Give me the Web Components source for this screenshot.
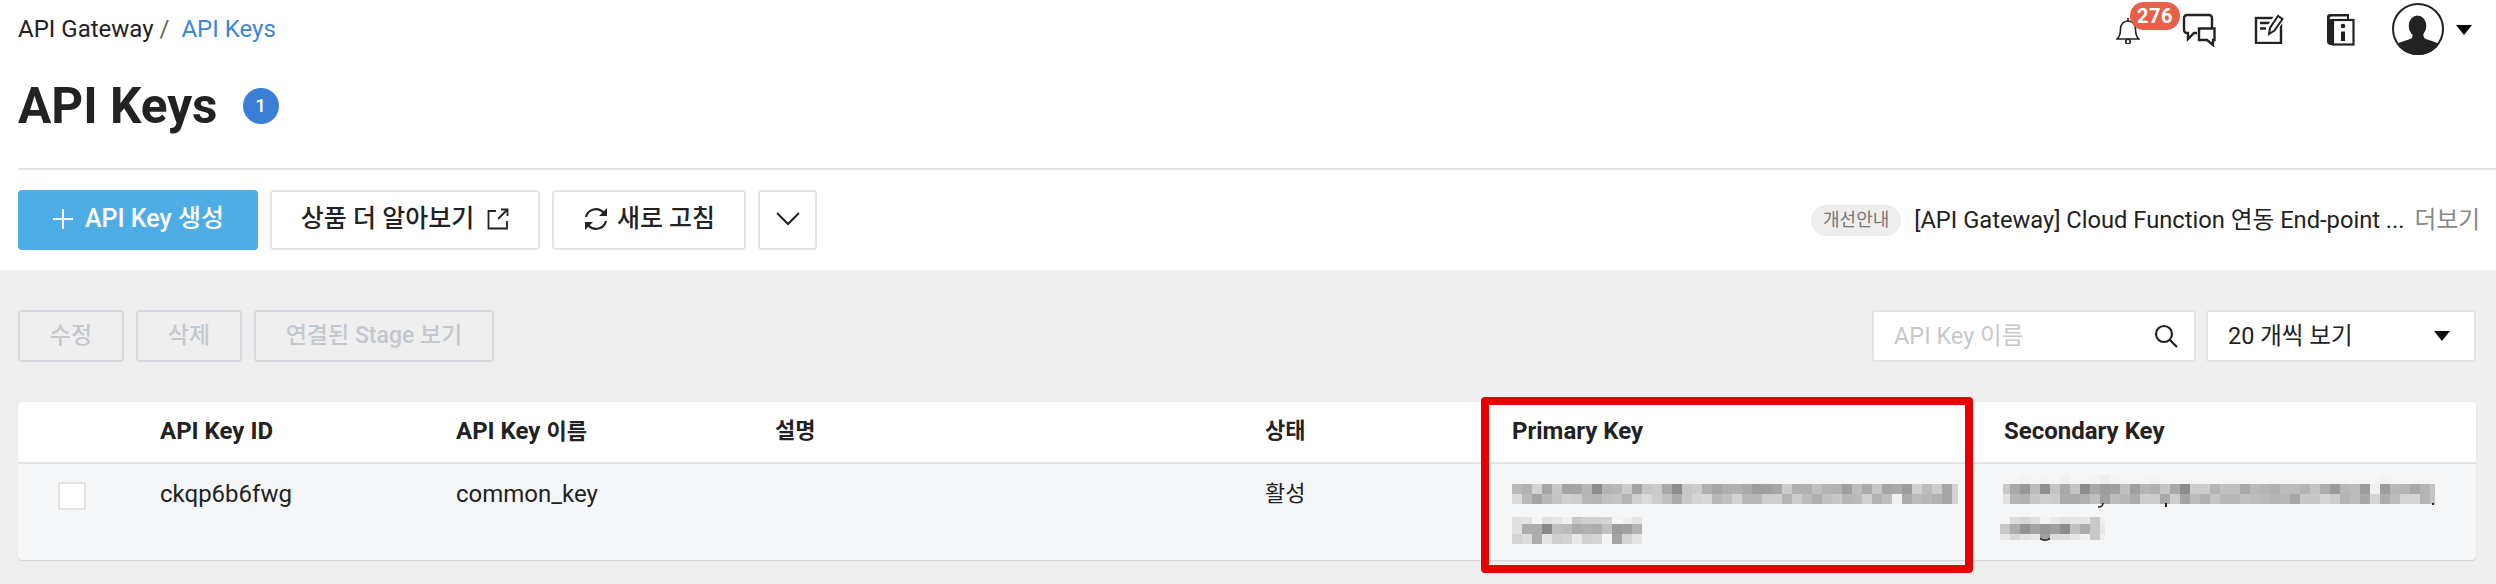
<!DOCTYPE html>
<html lang="ko">
<head>
  <meta charset="UTF-8">
  <title>API Keys</title>
  <style>
    html, body { margin: 0; padding: 0; background: #fff; overflow: hidden; }
    body { font-family: Roboto, "Noto Sans CJK KR", sans-serif; color: #222; }
  </style>
</head>
<body>
  <api-keys-page></api-keys-page>
  <script>
    const FONT = 'Roboto, "Noto Sans CJK KR", sans-serif';

    class UiButton extends HTMLElement {
      constructor() {
        super();
        this.attachShadow({ mode: 'open' });
        this.shadowRoot.innerHTML = `
          <style>
            :host { display: inline-flex; align-items: center; justify-content: center; box-sizing: border-box;
              height: 60px; padding-bottom: 2px; border: 2px solid #e4e4e4; border-radius: 4px; background: #fff; color: #222;
              font: 500 25px/30px ${FONT}; white-space: nowrap; }
            :host([variant=primary]) { background: #4fade6; border-color: #4fade6; color: #fff; }
            :host([variant=off]) { height: 52px; padding-bottom: 0; background: transparent; border-color: #d6dae0; color: #c3c8cf; font-size: 23px; font-weight: 500; }
          </style>
          <slot></slot>`;
      }
    }
    customElements.define('ui-button', UiButton);

    class TopBar extends HTMLElement {
      constructor() {
        super();
        this.attachShadow({ mode: 'open' });
        this.shadowRoot.innerHTML = `
          <style>
            :host { display: flex; justify-content: space-between; height: 60px; padding-left: 18px; }
            .crumbs { display: flex; font: 400 24px/60px ${FONT}; height: 60px; margin-top: -1px; }
            .crumbs i { font-style: normal; color: #666; margin: 0 12px 0 6px; }
            .crumbs b { font-weight: 400; color: #3d85d8; }
            .icons { position: relative; width: 380px; height: 60px; display: flex; align-items: flex-start; }
            svg { display: block; flex: none; }
            .bell { margin: 16px 0 0 0; }
            .chat { margin: 13px 0 0 42px; }
            .note { margin: 14px 0 0 38px; }
            .book { margin: 14px 0 0 43px; }
            .avatar { margin: 3px 0 0 37px; }
            .caret { margin: 25px 0 0 12px; }
            .count { position: absolute; left: 14px; top: 2px; width: 50px; height: 28px; border-radius: 14px; background: #e85f4a;
              color: #fff; font: 700 20px/28px ${FONT}; text-align: center; letter-spacing: .5px; }
          </style>
          <div class="crumbs"><span>API Gateway</span><i>/</i><b>API Keys</b></div>
          <div class="icons">
            <svg class="bell" width="24" height="28" viewBox="0 0 24 28" fill="none" stroke="#222" stroke-width="1.600">
              <path d="M1 23h22c-2.500-2-3.500-5-3.500-10 0-4.500-3-8-7.500-8s-7.500 3.500-7.500 8c0 5-1 8-3.500 10z"/>
              <path d="M12 5V2"/><circle cx="12" cy="25.500" r="2.300"/>
            </svg>
            <svg class="chat" width="34" height="34" viewBox="0 0 34 34" fill="none" stroke="#222" stroke-width="2.400">
              <path d="M15 20h-3l-6 6v-6H5a3 3 0 0 1-3-3V5a3 3 0 0 1 3-3h22a3 3 0 0 1 3 3v10"/>
              <path d="M17 15.500h15.500V27H31v5l-6-5h-8z" fill="#fff"/>
            </svg>
            <svg class="note" width="30" height="30" viewBox="0 0 30 30" fill="none" stroke="#222" stroke-width="2.400">
              <rect x="2" y="4" width="25" height="25"/>
              <path d="M6 9h11M6 14.500h6" stroke-width="2.600"/>
              <path d="M14 21l1-7L23 2l5 3-8 12z" fill="#fff" stroke="#fff" stroke-width="5"/>
              <path d="M15 20l1-6L24 2l4.500 3-8 11.500z" fill="#fff" stroke-width="2"/>
            </svg>
            <svg class="book" width="28" height="32" viewBox="0 0 28 32" fill="none">
              <path d="M3 0h19v6H7v25H4a4 4 0 0 1-4-4V3a3 3 0 0 1 3-3z" fill="#222"/>
              <path d="M2.500 4.500a2 2 0 0 1 2-2H20V5H5a2 2 0 0 1-2.500-.500z" fill="#fff"/>
              <rect x="6" y="6" width="20.500" height="24.500" stroke="#222" stroke-width="2.200"/>
              <circle cx="16" cy="12" r="2.300" fill="#222"/><rect x="14" y="17.500" width="4" height="9.500" fill="#222"/>
            </svg>
            <svg class="avatar" width="52" height="52" viewBox="0 0 52 52">
              <defs><clipPath id="c"><circle cx="26" cy="26" r="26"/></clipPath></defs>
              <circle cx="26" cy="26" r="25" fill="#fff" stroke="#222" stroke-width="2"/>
              <g clip-path="url(#c)" fill="#222">
                <ellipse cx="25.500" cy="23" rx="8.800" ry="10.500"/>
                <path d="M3 43c5-5 12-5 17-8l1-5h10l1 5c5 3 12 3 17 8v9H3z"/>
              </g>
            </svg>
            <svg class="caret" width="16" height="10" viewBox="0 0 16 10"><path d="M0 0h16L8 10z" fill="#000"/></svg>
            <span class="count">276</span>
          </div>`;
      }
    }
    customElements.define('top-bar', TopBar);

    class PageTitle extends HTMLElement {
      constructor() {
        super();
        this.attachShadow({ mode: 'open' });
        this.shadowRoot.innerHTML = `
          <style>
            :host { display: flex; align-items: center; height: 110px; padding-bottom: 16px; box-sizing: border-box;
              border-bottom: 2px solid #e2e2e2; margin-left: 18px; }
            h1 { margin: 0; font: 700 49.500px/56px ${FONT}; color: #222; }
            span { width: 36px; height: 36px; margin-left: 25px; border-radius: 50%; background: #3a7fd5; color: #fff;
              font: 500 19px/36px ${FONT}; text-align: center; }
          </style>
          <h1><slot></slot></h1><span>1</span>`;
      }
    }
    customElements.define('page-title', PageTitle);

    class NoticeLine extends HTMLElement {
      constructor() {
        super();
        this.attachShadow({ mode: 'open' });
        this.shadowRoot.innerHTML = `
          <style>
            :host { display: flex; align-items: center; margin-left: auto; white-space: nowrap; font: 400 23.700px/30px ${FONT}; }
            .tag { width: 90px; height: 31px; border-radius: 16px; background: #eee; color: #777; text-align: center; font-size: 18px; line-height: 30px; margin-right: 13px; }
            .more { color: #888; margin-left: 10px; }
          </style>
          <span class="tag">개선안내</span><span><slot></slot></span><span class="more">더보기</span>`;
      }
    }
    customElements.define('notice-line', NoticeLine);

    class ActionBar extends HTMLElement {
      constructor() {
        super();
        this.attachShadow({ mode: 'open' });
        this.shadowRoot.innerHTML = `
          <style>
            :host { display: flex; align-items: center; gap: 12px; height: 100px; padding: 0 16px 0 18px; box-sizing: border-box; }
          </style>
          <slot></slot>`;
      }
    }
    customElements.define('action-bar', ActionBar);

    class ListTools extends HTMLElement {
      constructor() {
        super();
        this.attachShadow({ mode: 'open' });
        this.shadowRoot.innerHTML = `
          <style>
            :host { display: flex; align-items: center; gap: 12px; height: 52px; }
            .sp { flex: 1; }
            .search, .select { display: flex; align-items: center; box-sizing: border-box; height: 52px; background: #fff;
              border: 2px solid #e4e4e4; border-radius: 3px; font: 400 23.500px/30px ${FONT}; }
            .search { width: 324px; padding: 0 16px 0 20px; color: #c8c8c8; justify-content: space-between; margin-right: -2px; }
            .select { width: 270px; padding: 0 24px 0 20px; color: #222; justify-content: space-between; }
            svg { display: block; }
          </style>
          <slot></slot>
          <div class="sp"></div>
          <div class="search"><span>API Key 이름</span>
            <svg width="24" height="24" viewBox="0 0 24 24" fill="none" stroke="#222" stroke-width="2.200"><circle cx="10" cy="10" r="8"/><path d="M16 16l7 7"/></svg></div>
          <div class="select"><span>20 개씩 보기</span>
            <svg width="16" height="10" viewBox="0 0 16 10"><path d="M0 0h16L8 10z" fill="#111"/></svg></div>`;
      }
    }
    customElements.define('list-tools', ListTools);

    // blurred key text, rows of grey cells: "height|first width|last width|hex hex hex"
    class PixelBlock extends HTMLElement {
      constructor() {
        super();
        this.attachShadow({ mode: 'open' });
        let html = '<style>:host{display:block} .r{display:flex} .r span{display:block;flex:none}</style>';
        for (const row of this.getAttribute('rows').split(';')) {
          const [h, fw, lw, cells] = row.trim().split('|');
          const list = cells.trim().split(/\s+/);
          html += `<div class="r" style="height:${h}px">`;
          list.forEach((c, i) => {
            const w = i === 0 ? fw : i === list.length - 1 ? lw : 10;
            html += `<span style="width:${w}px;height:${h}px;background:#${c}${c}${c}"></span>`;
          });
          html += '</div>';
        }
        this.shadowRoot.innerHTML = html;
      }
    }
    customElements.define('pixel-block', PixelBlock);

    class DataTable extends HTMLElement {
      constructor() {
        super();
        this.attachShadow({ mode: 'open' });
        this.shadowRoot.innerHTML = `
          <style>
            :host { display: block; position: relative; margin-top: 40px; height: 158px; box-sizing: border-box; border-radius: 4px;
              background: #f5f6f8; box-shadow: 0 1px 1px #d4d4d4, 0 0 1px #ddd; }
            .row { display: grid; grid-template-columns: 142px 296px 319px 490px 247px 492px 1fr; }
            .head { height: 62px; box-sizing: border-box; background: #fff; border-bottom: 2px solid #e4e4e4; border-radius: 4px 4px 0 0;
              font: 700 24px/58px ${FONT}; color: #222; }
            .body { height: 96px; font: 400 24px/30px ${FONT}; color: #222; }
            .ko { font-size: 22px; }
            .body > div { padding-top: 15px; box-sizing: border-box; }
            .check { width: 28px; height: 28px; margin: 3px 0 0 40px; box-sizing: border-box; background: #fff; border: 2px solid #e2e2e2; border-radius: 3px; }
            .keys pixel-block + pixel-block { margin-top: 13px; }
            .body .k1 { padding-top: 20px; }
            .body .k2 { padding-top: 11px; position: relative; }
            .k2 pixel-block { margin-left: -1px; }
            .k2 pixel-block:nth-of-type(2) { margin-left: -4px; margin-top: 13px; }
            .tick { position: absolute; background: #222; }
            .mark { position: absolute; }
            .box { position: absolute; left: 1463px; top: -5px; width: 492px; height: 176px; box-sizing: border-box; border: 8px solid #e60000; border-radius: 4px; }
          </style>
          <div class="row head">
            <div></div><div>API Key ID</div><div>API Key <span class="ko">이름</span></div><div class="ko">설명</div><div class="ko">상태</div><div>Primary Key</div><div>Secondary Key</div>
          </div>
          <div class="row body">
            <div><div class="check"></div></div>
            <div>ckqp6b6fwg</div>
            <div>common_key</div>
            <div></div>
            <div class="ko">활성</div>
            <div class="keys k1">
              <pixel-block rows="10|10|6|b8 b2 d4 a6 c8 a4 a6 b6 8c b4 b8 cc a4 c6 cc aa 8c c8 cc b0 a6 ae b0 aa 9e a0 a6 cc ae b0 c0 b4 b2 a0 bc aa c6 a6 aa 9c d0 bc cc a8 d4;
                10|10|6|dc b8 a4 b8 c6 d0 cc b8 b4 c0 c4 b4 d0 da cc c0 ac c8 d4 d8 b8 c0 d4 b8 b8 ce ce b4 cc bc ae c0 c8 b6 ba d0 b2 bc f0 ac bc b8 b2 a8 d4"></pixel-block>
              <pixel-block rows="7|10|10|e0 e4 f5 e0 e6 f0 c8 d0 d0 d4 f5 f0 e4;
                10|10|10|e0 ac ac 88 c0 bc ac b0 ac c0 9c a0 b4;
                10|10|10|d4 dc ac e4 ce d2 e8 d0 d4 f5 a4 d4 e4"></pixel-block>
            </div>
            <div class="keys k2">
              <pixel-block rows="9|7|5|f5 f5 f2 f5 f4 f5 f0 f5 f5 f2 ee f4 f5 f5 f5 f2 f5 f5 f5 f5 f5 f5 f5 f5 f5 f5 f5 f5 f5 f5 f5 f5 f5 f5 f5 f5 f5 f5 f2 f5 f5 f5 f5 f5;
                10|7|5|c8 a8 98 bc 90 c4 a8 c4 8c a8 9c a0 c0 a0 b4 b0 c4 a8 8c cc cc b4 c0 c0 a8 b8 b4 b0 bc bc b4 c4 ac 9c b8 bc 9c f0 9c b8 b4 a8 b4 c4;
                10|7|5|e0 b4 b0 c8 ce cc ac ac b0 c0 a0 bc b8 ac cc cc a8 cc a4 bc b0 c4 b8 b8 c0 bc b8 b4 b8 a8 c8 c8 d4 cc b4 bc a8 d4 ac bc d4 d4 b4 c4"></pixel-block>
              <pixel-block rows="7|10|5|f5 dc d8 e0 f2 ea e2 e4 e6 c8 f0;
                10|10|5|c8 ac 94 a4 98 a0 8c c0 ac c8 e8;
                6|10|5|e8 d8 e4 e8 a0 dc dc e6 f0 c8 f0"></pixel-block>
              <svg class="mark" style="left:94px;top:39px" width="6" height="5" viewBox="0 0 6 5"><path d="M5 0C5 3 3 4 0 4" fill="none" stroke="#222" stroke-width="1.500"/></svg>
              <span class="tick" style="left:161px;top:39px;width:2px;height:4px"></span>
              <span class="tick" style="left:428px;top:39px;width:2px;height:2px"></span>
              <svg class="mark" style="left:36px;top:74px" width="10" height="4" viewBox="0 0 10 4"><path d="M0 0C2 3 8 3 10 0" fill="none" stroke="#222" stroke-width="1.500"/></svg>
            </div>
          </div>
          <div class="box"></div>`;
      }
    }
    customElements.define('data-table', DataTable);

    class ApiKeysPage extends HTMLElement {
      constructor() {
        super();
        this.attachShadow({ mode: 'open' });
        this.shadowRoot.innerHTML = `
          <style>
            :host { display: block; width: 2496px; height: 584px; overflow: hidden; font-family: ${FONT}; }
            .grey { background: #efefef; height: 314px; padding: 40px 20px 0 18px; box-sizing: border-box; }
            .off { display: flex; gap: 12px; }
            .ico { display: block; flex: none; }
          </style>
          <top-bar></top-bar>
          <page-title>API Keys</page-title>
          <action-bar>
            <ui-button variant="primary" style="width:240px">
              <svg class="ico" width="22" height="22" viewBox="0 0 22 22" fill="none" stroke="#fff" stroke-width="2" style="margin-right:11px"><path d="M11 1v20M1 11h20"/></svg>API Key 생성</ui-button>
            <ui-button style="width:270px">상품 더 알아보기
              <svg class="ico" width="22" height="22" viewBox="0 0 22 22" fill="none" stroke="#222" stroke-width="1.800" style="margin-left:13px"><path d="M9 3H1.500v17.500H20V13M11 11L20.500 1.500M14 1.500h6.500V8"/></svg></ui-button>
            <ui-button style="width:194px">
              <svg class="ico" width="26" height="26" viewBox="0 0 26 26" fill="none" stroke="#222" stroke-width="2.200" style="margin-right:8px"><path d="M3 11A10.200 10.200 0 0 1 20.500 6.500M23 15A10.200 10.200 0 0 1 5.500 19.500"/><path d="M24 2v8h-8zM2 24v-8h8z" fill="#222" stroke="none"/></svg>새로 고침</ui-button>
            <ui-button style="width:59px">
              <svg class="ico" width="24" height="14" viewBox="0 0 24 14" fill="none" stroke="#222" stroke-width="2"><path d="M1 1l11 11L23 1"/></svg></ui-button>
            <notice-line>[API Gateway] Cloud Function 연동 End-point ...</notice-line>
          </action-bar>
          <div class="grey">
            <list-tools>
              <div class="off">
                <ui-button variant="off" style="width:106px">수정</ui-button>
                <ui-button variant="off" style="width:106px">삭제</ui-button>
                <ui-button variant="off" style="width:240px">연결된 Stage 보기</ui-button>
              </div>
            </list-tools>
            <data-table></data-table>
          </div>`;
      }
    }
    customElements.define('api-keys-page', ApiKeysPage);
  </script>
</body>
</html>
